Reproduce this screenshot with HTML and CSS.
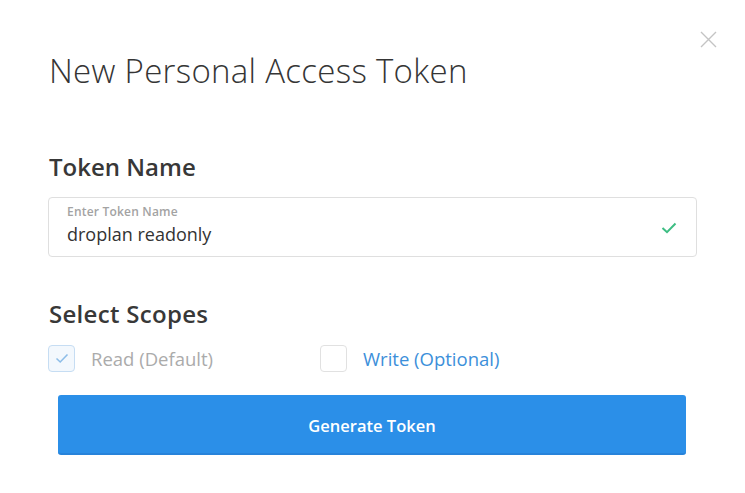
FILE: index.html
```html
<!DOCTYPE html>
<html>
<head>
<meta charset="utf-8">
<link rel="stylesheet" href="styles.css">
</head>
<body>
<div class="modal">
  <button class="close" aria-label="Close">
    <svg width="17" height="17" viewBox="0 0 17 17"><path d="M1 1L16 16M16 1L1 16" stroke="#c4c4c4" stroke-width="1.4" fill="none"/></svg>
  </button>
  <h1 class="title">New Personal Access Token</h1>
  <h2 class="section">Token Name</h2>
  <div class="field">
    <div class="field-text">
      <div class="field-label">Enter Token Name</div>
      <div class="field-value">droplan readonly</div>
    </div>
    <svg class="ok" width="16" height="12" viewBox="0 0 16 12"><path d="M1.5 6L6 10.2L14.5 1.5" stroke="#3dbd83" stroke-width="2" fill="none"/></svg>
  </div>
  <h2 class="section scopes">Select Scopes</h2>
  <div class="options">
    <label class="option">
      <span class="box checked">
        <svg width="14" height="11" viewBox="0 0 14 11"><path d="M1.5 5.5L5.2 9L12.5 1.5" stroke="#8dbde8" stroke-width="1.6" fill="none"/></svg>
      </span>
      <span class="opt-text muted">Read (Default)</span>
    </label>
    <label class="option">
      <span class="box"></span>
      <span class="opt-text link">Write (Optional)</span>
    </label>
  </div>
  <button class="generate">Generate Token</button>
</div>
</body>
</html>
```
FILE: styles.css
```css
* { box-sizing: border-box; }
html, body { margin: 0; padding: 0; background: #fff; }
body { font-family: "Open Sans", Lato, sans-serif; color: #333; }
.modal { position: relative; width: 745px; height: 493px; padding: 51px 48px 0 48px; }
.close { position: absolute; left: 700px; top: 31px; width: 17px; height: 17px; padding: 0; border: 0; background: none; display: block; }
.close svg { display: block; }
.title { margin: 0 0 0 1px; font-weight: 300; font-size: 33px; line-height: 40px; letter-spacing: 0.3px; color: #353535; }
.section { margin: 61px 0 0 1px; font-weight: 600; font-size: 24px; line-height: 30px; color: #383838; }
.scopes { margin-top: 42px; letter-spacing: 0.3px; }
.field { margin-top: 15px; height: 60px; border: 1px solid #dfdfdf; border-radius: 4px; display: flex; align-items: flex-start; justify-content: space-between; padding: 7px 19px 0 18px; }
.field-text { display: flex; flex-direction: column; }
.field-label { font-size: 12px; line-height: 14px; color: #a3a3a3; font-weight: 600; letter-spacing: 0.2px; }
.field-value { margin-top: 4px; font-size: 18px; line-height: 23px; color: #333; }
.ok { display: block; align-self: center; margin-top: -5px; }
.options { display: flex; margin-top: 16px; }
.option { display: flex; align-items: center; width: 272px; }
.box { width: 27px; height: 27px; border: 1px solid #e1e1e1; border-radius: 4px; display: flex; align-items: center; justify-content: center; background: #fff; }
.box.checked { background: #f3f8fd; border-color: #c6ddf3; }
.opt-text { margin-left: 16px; font-size: 18.5px; line-height: 24px; }
.muted { color: #ababab; }
.link { color: #3c8fda; }
.generate { display: block; margin: 23px 0 0 10px; width: 628px; height: 60px; border: 0; border-bottom: 2px solid #2783da; border-radius: 3px; background: #2b8fe8; color: #fff; font-family: "Open Sans", Lato, sans-serif; font-weight: 600; font-size: 16.5px; padding: 2px 0 0 0; }
```
